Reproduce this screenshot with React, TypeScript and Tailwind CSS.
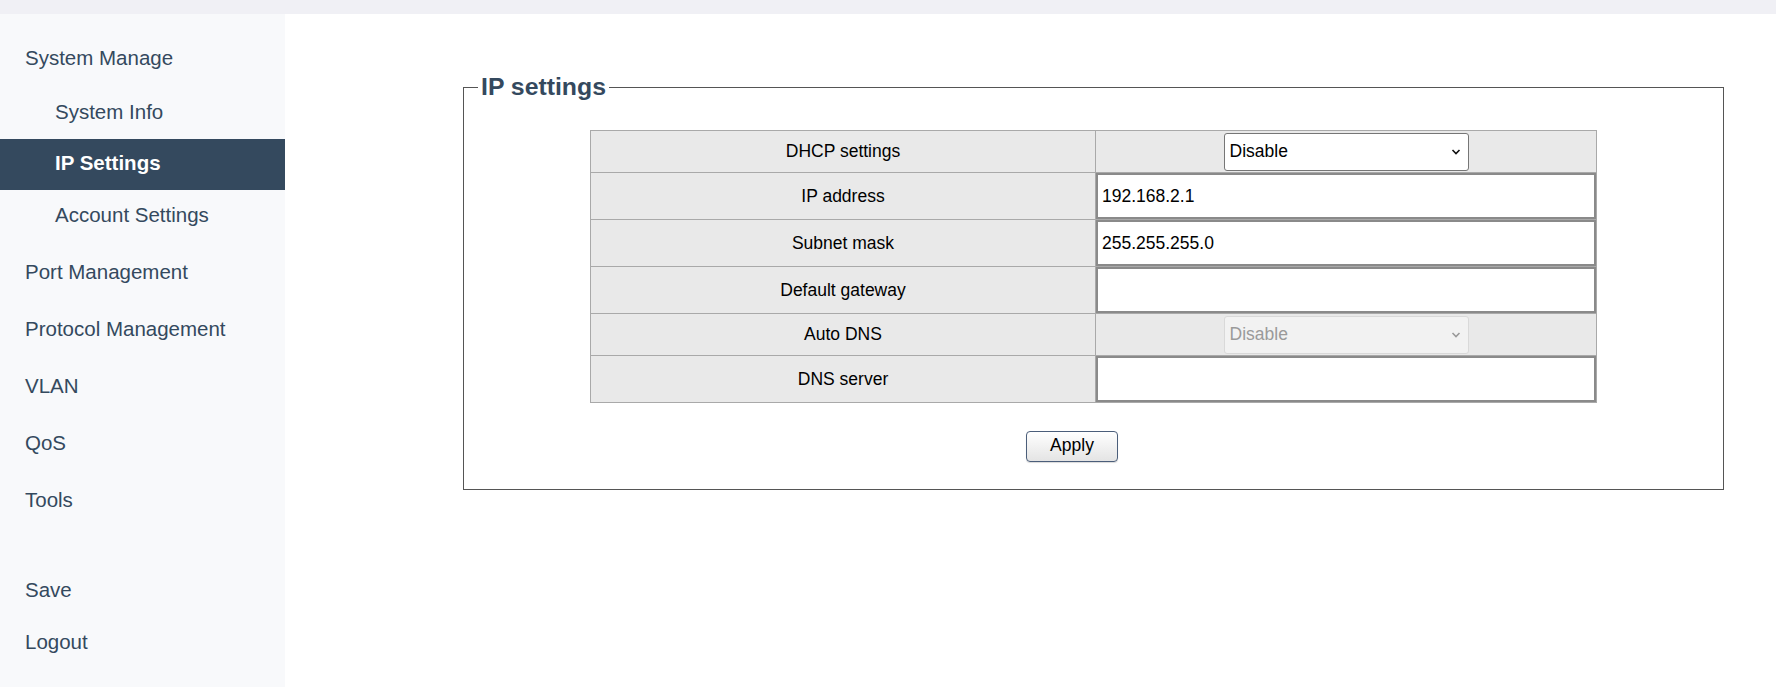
import React from 'react';

const menuTop = 'h-[51px] flex items-center pl-[25px] text-[20.5px] text-[#34495e] mt-[6px]';
const menuSub = 'h-[51px] flex items-center pl-[55px] text-[20.5px]';

const Chevron: React.FC<{ color: string }> = ({ color }) => (
  <svg
    className="absolute right-[8px] top-1/2 -translate-y-1/2 pointer-events-none"
    width="10"
    height="7"
    viewBox="0 0 10 7"
    fill="none"
  >
    <path d="M1.5 1.5 L5 5 L8.5 1.5" stroke={color} strokeWidth="1.6" />
  </svg>
);

const inputCls =
  'block w-full h-[46px] border-2 border-[#8a8a8a] bg-white pl-[4px] text-[17.5px] text-black outline-none';

const App: React.FC = () => {
  return (
    <div className="w-full h-[687px] flex flex-col bg-white font-['Liberation_Sans',Arial,sans-serif] overflow-hidden">
      {/* Top strip */}
      <div className="h-[14px] bg-[#f0f0f5] shrink-0" />

      <div className="flex flex-1 min-h-0">
        {/* Sidebar */}
        <nav className="w-[285px] shrink-0 bg-[#f8f9fb] pt-[13px]">
          <div className={menuTop}>System Manage</div>
          <div className="mt-[4px]">
            <div className={menuSub + ' text-[#34495e] pb-[2px]'}>System Info</div>
            <div className={menuSub + ' bg-[#34495e] text-white font-bold pb-[3px]'}>IP Settings</div>
            <div className={menuSub + ' text-[#34495e]'}>Account Settings</div>
          </div>
          <div className={menuTop}>Port Management</div>
          <div className={menuTop}>Protocol Management</div>
          <div className={menuTop}>VLAN</div>
          <div className={menuTop}>QoS</div>
          <div className={menuTop}>Tools</div>
          <div className="h-[51px] flex items-center pl-[25px] text-[20.5px] text-[#34495e] mt-[39px]">Save</div>
          <div className="h-[51px] flex items-center pl-[25px] text-[20.5px] text-[#34495e] mt-[1px]">Logout</div>
        </nav>

        {/* Main content */}
        <main className="flex-1 min-w-0">
          <fieldset className="ml-[178px] mr-[52px] mt-[59px] border border-[#555] pb-[27px]">
            <legend className="ml-[14px] px-[3px] text-[24.8px] leading-[28px] font-bold text-[#34495e]">
              IP settings
            </legend>

            <table className="w-[1007px] mx-auto mt-[29px] border-collapse border border-[#a9a9a9] text-[17.5px] text-black">
              <tbody>
                <tr className="h-[42px]">
                  <td className="w-[505px] border border-[#a9a9a9] bg-[#e9e9e9] text-center p-0">DHCP settings</td>
                  <td className="border border-[#a9a9a9] bg-[#e9e9e9] text-center p-0">
                    <div className="relative inline-block align-middle">
                      <select
                        defaultValue="Disable"
                        className="appearance-none w-[245px] h-[38px] border border-[#767676] rounded-[3px] bg-white pl-[5px] text-[17.5px] text-black outline-none block"
                      >
                        <option>Disable</option>
                        <option>Enable</option>
                      </select>
                      <Chevron color="#111" />
                    </div>
                  </td>
                </tr>
                <tr className="h-[47px]">
                  <td className="border border-[#a9a9a9] bg-[#e9e9e9] text-center p-0">IP address</td>
                  <td className="border border-[#a9a9a9] bg-[#e9e9e9] p-0">
                    <input defaultValue="192.168.2.1" className={inputCls} />
                  </td>
                </tr>
                <tr className="h-[47px]">
                  <td className="border border-[#a9a9a9] bg-[#e9e9e9] text-center p-0">Subnet mask</td>
                  <td className="border border-[#a9a9a9] bg-[#e9e9e9] p-0">
                    <input defaultValue="255.255.255.0" className={inputCls} />
                  </td>
                </tr>
                <tr className="h-[47px]">
                  <td className="border border-[#a9a9a9] bg-[#e9e9e9] text-center p-0">Default gateway</td>
                  <td className="border border-[#a9a9a9] bg-[#e9e9e9] p-0">
                    <input defaultValue="" className={inputCls} />
                  </td>
                </tr>
                <tr className="h-[42px]">
                  <td className="border border-[#a9a9a9] bg-[#e9e9e9] text-center p-0">Auto DNS</td>
                  <td className="border border-[#a9a9a9] bg-[#e9e9e9] text-center p-0">
                    <div className="relative inline-block align-middle">
                      <select
                        disabled
                        defaultValue="Disable"
                        className="appearance-none w-[245px] h-[38px] border border-[#d9d9d9] rounded-[3px] bg-[#f2f2f2] pl-[5px] text-[17.5px] text-[#9a9a9a] outline-none block"
                      >
                        <option>Disable</option>
                        <option>Enable</option>
                      </select>
                      <Chevron color="#9a9a9a" />
                    </div>
                  </td>
                </tr>
                <tr className="h-[47px]">
                  <td className="border border-[#a9a9a9] bg-[#e9e9e9] text-center p-0">DNS server</td>
                  <td className="border border-[#a9a9a9] bg-[#e9e9e9] p-0">
                    <input defaultValue="" className={inputCls} />
                  </td>
                </tr>
              </tbody>
            </table>

            <div className="flex justify-center mt-[28px] pr-[43px]">
              <button className="w-[92px] h-[31px] border border-[#4b5e7a] rounded-[4px] bg-linear-to-b from-white to-[#e4e4e4] text-[17.5px] leading-[26px] text-black pb-[4px] shadow-[0_1px_1px_rgba(0,0,0,0.15)]">
                Apply
              </button>
            </div>
          </fieldset>
        </main>
      </div>
    </div>
  );
};

export default App;
